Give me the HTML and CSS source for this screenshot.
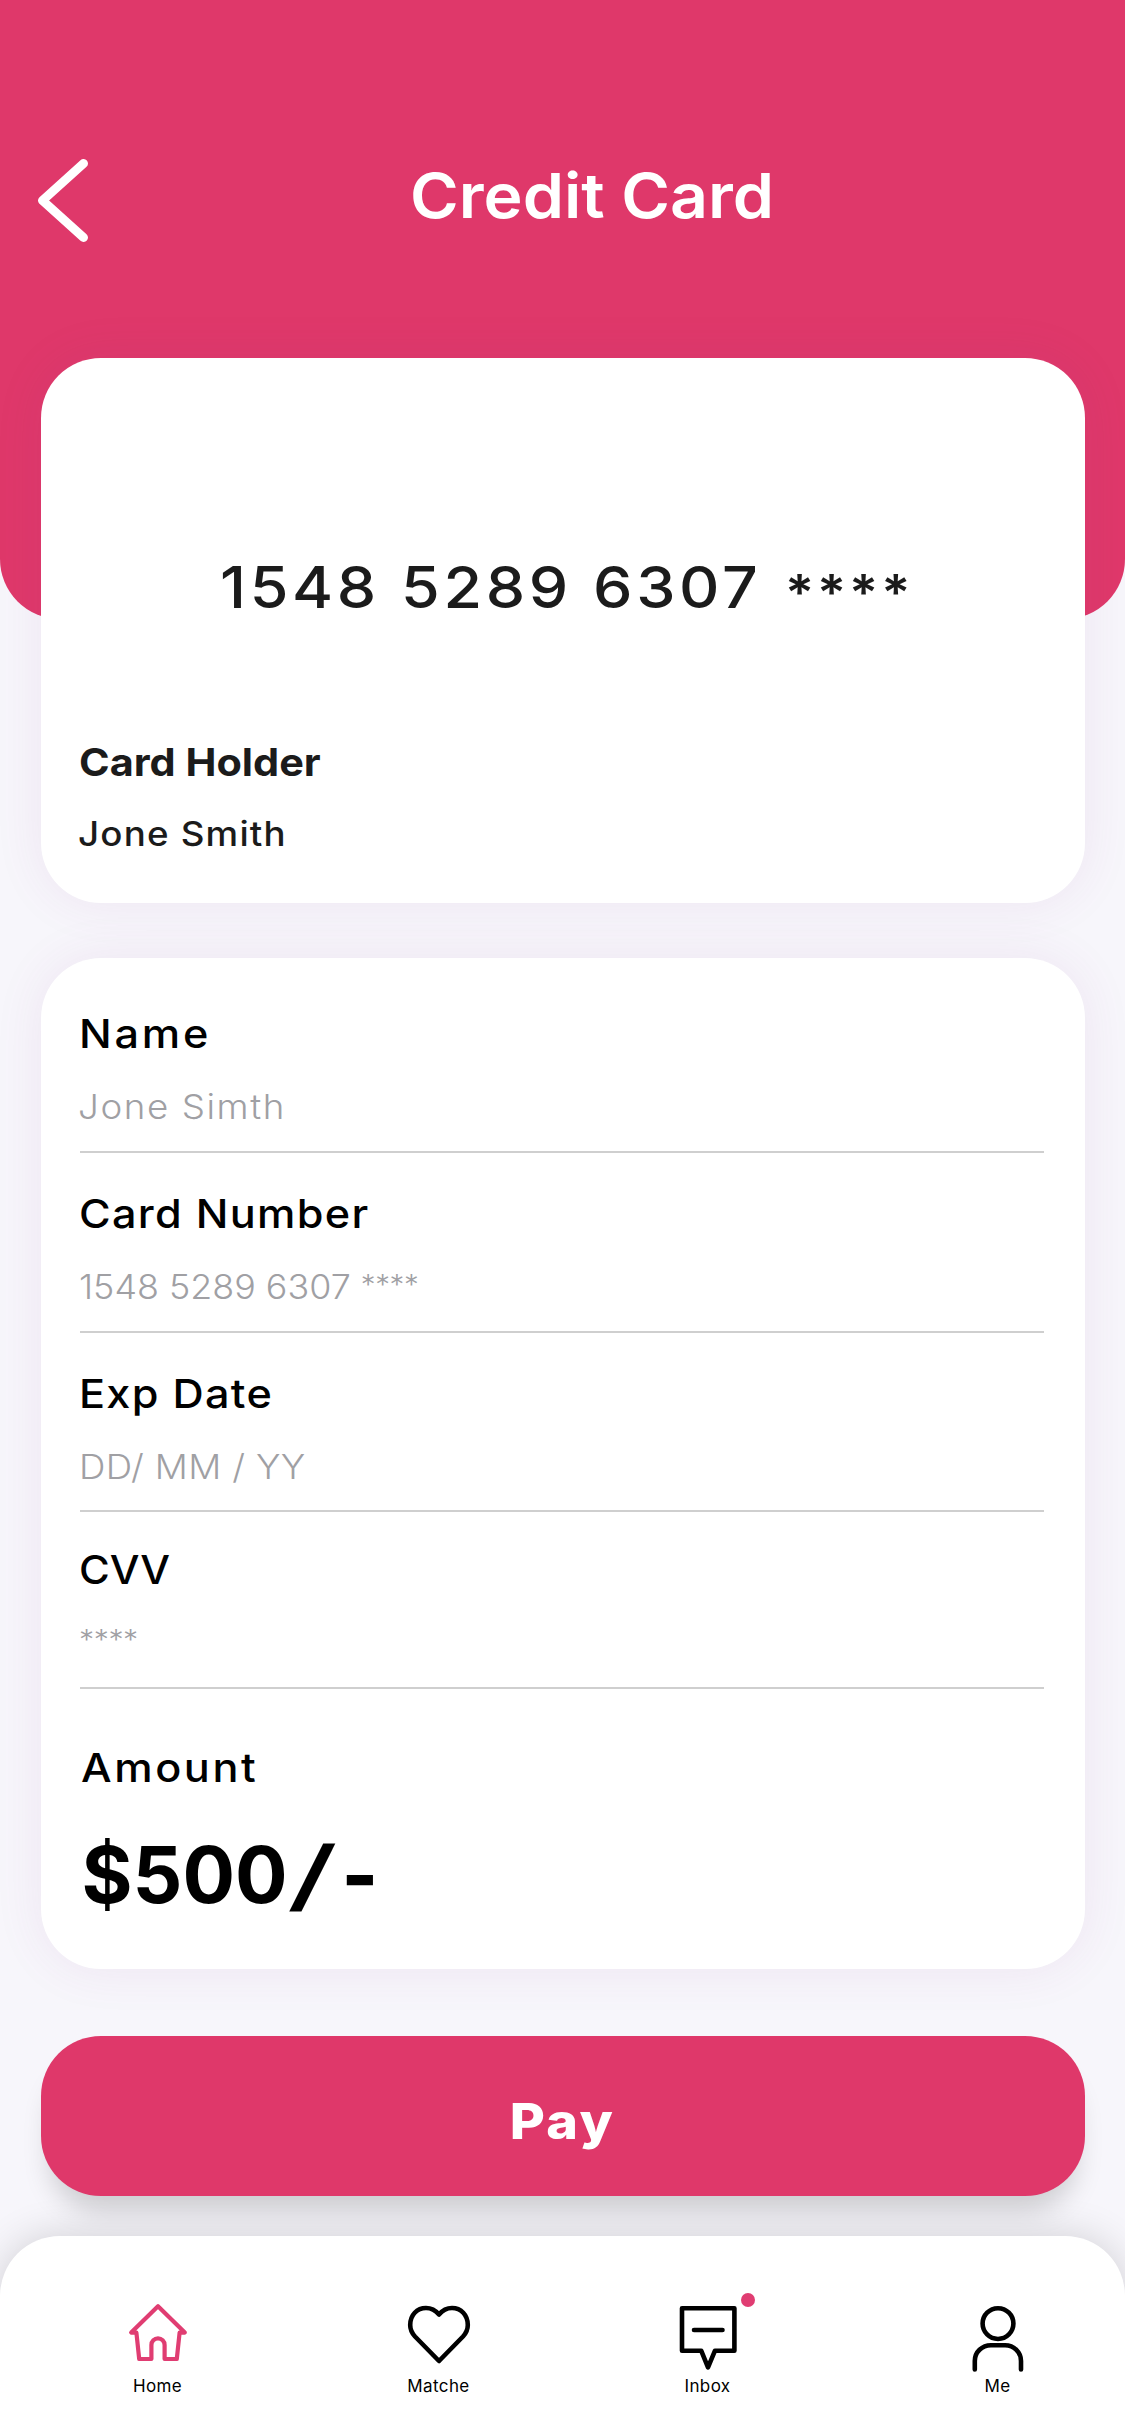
FILE: index.html
```html
<!DOCTYPE html>
<html lang="en">
<head>
<meta charset="utf-8">
<title>Credit Card</title>
<link rel="stylesheet" href="styles.css">
</head>
<body>
<header class="header">
  <svg class="back" viewBox="0 0 52 84" width="52" height="84"><path d="M46.5 4.5 5.5 41.5l41 37"/></svg>
  <h1 class="title">Credit Card</h1>
</header>
<main class="content">
  <section class="panel card">
    <div class="digits"><span>1548</span><span>5289</span><span>6307</span><span class="mask">****</span></div>
    <div class="holder-label">Card Holder</div>
    <div class="holder-name">Jone Smith</div>
  </section>
  <section class="panel form">
    <div class="field">
      <div class="label label-name">Name</div>
      <div class="value value-name">Jone Simth</div>
    </div>
    <div class="field">
      <div class="label">Card Number</div>
      <div class="value value-number">1548 5289 6307 <span class="stars stars-inline">****</span></div>
    </div>
    <div class="field field-date">
      <div class="label">Exp Date</div>
      <div class="value value-date">DD/ MM / YY</div>
    </div>
    <div class="field field-cvv">
      <div class="label label-cvv">CVV</div>
      <div class="value value-cvv"><span class="stars">****</span></div>
    </div>
    <div class="label label-amount">Amount</div>
    <div class="amount"><span>$500</span><span class="slash">/</span><span class="dash">-</span></div>
  </section>
  <button class="pay" type="button"><span class="pay-text">Pay</span></button>
</main>
<nav class="nav">
  <a class="item home">
    <svg viewBox="0 0 64 72" width="64" height="72"><path d="M32 5.2 5.2 31.6H10.4L13.2 58H25.4V44a6.6 6.6 0 0 1 13.2 0V58H50.8L53.6 31.6H58.8Z"/></svg>
    <span>Home</span>
  </a>
  <a class="item matche">
    <svg viewBox="0 0 64 72" width="64" height="72"><path d="M32 13.5C28.5 9.3 24 7 19 7 10 7 3.2 14 3.2 24 3.2 28.500 4.800 32 8 35.500L32 60 56 35.500C59.200 32 60.800 28.500 60.800 24 60.800 14 54 7 45 7 40 7 35.500 9.300 32 13.500Z"/></svg>
    <span>Matche</span>
  </a>
  <a class="item inbox">
    <svg viewBox="0 0 64 72" width="64" height="72"><path d="M6 7.200H58.400V49.700H39L32 66.300 25.200 49.700H6ZM18 29H46.500"/></svg>
    <i class="badge"></i>
    <span>Inbox</span>
  </a>
  <a class="item me">
    <svg viewBox="0 0 64 72" width="64" height="72"><circle cx="32" cy="22.600" r="15.400"/><path d="M8.800 68.500V60C8.800 51 16 44.300 25 44.300H39C48 44.300 55 51 55 60V68.500"/></svg>
    <span>Me</span>
  </a>
</nav>
</body>
</html>
```
FILE: styles.css
```css
* { box-sizing: border-box; }
body {
  margin: 0;
  width: 1125px;
  height: 2436px;
  overflow: hidden;
  background: #f7f6fb;
  color: #1b1b1b;
  font-family: Inter, sans-serif;
}
svg { display: block; fill: none; stroke: currentColor; stroke-linecap: round; stroke-linejoin: round; }

.header {
  display: flex;
  align-items: flex-start;
  height: 619px;
  padding: 158.500px 0 0 37px;
  border-radius: 0 0 60px 60px;
  background: #df386a;
  color: #fff;
}
.back { stroke-width: 9; }
.title {
  margin: -1px 0 0 321px;
  font-size: 62px;
  font-weight: 600;
  line-height: 75px;
  transform: scaleX(1.067);
  transform-origin: left;
}

.content {
  display: flex;
  flex-direction: column;
  margin: -261px 40.500px 0 40.500px;
}
.panel {
  border-radius: 60px;
  background: #fff;
  box-shadow: 0 0 50px rgba(140, 60, 140, .09);
}
.card { height: 545px; padding: 199px 0 0 38.500px; }
.digits {
  display: grid;
  grid-template-columns: 181px 192px 192px 150px;
  height: 60px;
  margin-left: 141px;
  font-size: 58px;
  font-weight: 500;
  line-height: 60px;
  letter-spacing: 3.400px;
}
.digits span { transform: scaleX(1.080); transform-origin: left; }
.digits .mask { padding-top: 5px; font-size: 50px; font-weight: 600; letter-spacing: 2.700px; }
.holder-label {
  margin-top: 121px;
  font-size: 38.500px;
  font-weight: 700;
  line-height: 48px;
  transform: scaleX(1.076);
  transform-origin: left;
}
.holder-name {
  margin: 25.500px 0 0 -1px;
  font-size: 34px;
  font-weight: 500;
  line-height: 44px;
  letter-spacing: 1.100px;
  transform: scaleX(1.080);
  transform-origin: left;
}

.form { height: 1011px; margin-top: 55px; padding: 15px 40.500px 0 39.500px; color: #000; }
.field { padding: 36px 0 24px; border-bottom: 2px solid #cfcfcf; }
.field-date { padding-bottom: 23px; }
.field-cvv { padding-top: 33px; }
.label {
  margin-left: -1px;
  font-size: 40px;
  font-weight: 500;
  line-height: 50px;
  letter-spacing: 1.200px;
  transform: scaleX(1.080);
  transform-origin: left;
}
.label-name { letter-spacing: 2.600px; }
.label-cvv { letter-spacing: 0; transform: scaleX(1.050); }
.label-amount { margin: 54px 0 0 1px; letter-spacing: 2.400px; }
.value {
  height: 40px;
  margin: 28px 0 0 -1px;
  color: #a0a0a4;
  font-size: 34px;
  font-weight: 300;
  line-height: 40px;
  white-space: nowrap;
  transform: scaleX(1.080);
  transform-origin: left;
}
.value-name { margin-left: -2px; letter-spacing: 1.450px; }
.value-number { transform: scaleX(1.055); }
.value-date { letter-spacing: .300px; }
.value-cvv { height: 45px; margin-top: 23px; }
.stars { font-size: 28px; letter-spacing: -.400px; }
.stars-inline { vertical-align: 4px; line-height: 1; }
.amount {
  display: grid;
  grid-template-columns: 210px 50px auto;
  margin: 35px 0 0 1.500px;
  font-size: 78px;
  font-weight: 700;
  line-height: 94px;
}
.slash { font-weight: 600; transform: scaleX(1.400) skewX(-5deg); transform-origin: 0 50%; }
.dash { font-weight: 800; }

.pay {
  height: 160px;
  margin: 66.500px -.500px 0 0;
  padding: 11px 0 0;
  border: 0;
  border-radius: 60px;
  background: #df386a;
  box-shadow: 0 24px 28px -10px rgba(0, 0, 0, .18);
  color: #fff;
  font: 800 49.500px/60px Inter, sans-serif;
}
.pay-text { display: inline-block; letter-spacing: 2.200px; transform: scaleX(1.090); }

.nav {
  position: relative;
  display: flex;
  align-items: flex-start;
  height: 200px;
  margin-top: 40.500px;
  padding: 65px 0 0 125.500px;
  border-radius: 60px 60px 0 0;
  background: #fff;
  box-shadow: 0 0 40px rgba(0, 0, 0, .16);
  color: #000;
}
.item {
  position: relative;
  display: flex;
  flex-direction: column;
  align-items: center;
  gap: 3px;
  width: 64px;
  font-size: 17px;
  line-height: 20px;
  letter-spacing: .400px;
}
.item svg { stroke-width: 4.600; }
.home svg { color: #e03d72; stroke-width: 4.200; }
.matche { margin-left: 217px; }
.inbox { margin-left: 205px; }
.me { margin-left: 226px; }
.badge {
  position: absolute;
  top: -8px;
  left: 65px;
  width: 14px;
  height: 14px;
  border-radius: 50%;
  background: #e03d72;
}
```
